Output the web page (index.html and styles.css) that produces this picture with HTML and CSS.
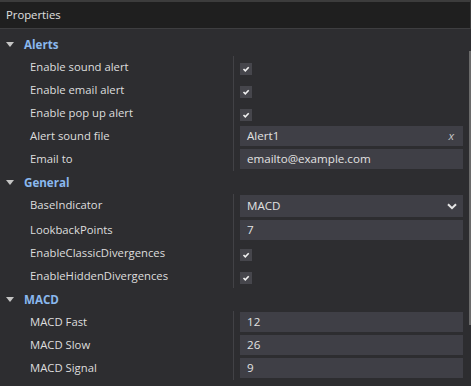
FILE: index.html
```html
<!DOCTYPE html>
<html lang="en">
<head>
  <meta charset="UTF-8">
  <title>Properties</title>
  <link rel="stylesheet" href="styles.css">
</head>
<body>
  <div class="panel">
    <div class="panel-title">Properties</div>
    <div class="panel-body">
      <div class="grid">
        <!-- Alerts -->
        <div class="section-head"><span class="caret"></span>Alerts</div>
        <div class="rows">
          <div class="row"><div class="label">Enable sound alert</div><div class="value"><span class="check"><svg width="12" height="12" viewBox="0 0 12 12"><path d="M3.5 6 L5.3 7.8 L8.7 4.3" fill="none" stroke="#f2f2f2" stroke-width="1.6"/></svg></span></div></div>
          <div class="row"><div class="label">Enable email alert</div><div class="value"><span class="check"><svg width="12" height="12" viewBox="0 0 12 12"><path d="M3.5 6 L5.3 7.8 L8.7 4.3" fill="none" stroke="#f2f2f2" stroke-width="1.6"/></svg></span></div></div>
          <div class="row"><div class="label">Enable pop up alert</div><div class="value"><span class="check"><svg width="12" height="12" viewBox="0 0 12 12"><path d="M3.5 6 L5.3 7.8 L8.7 4.3" fill="none" stroke="#f2f2f2" stroke-width="1.6"/></svg></span></div></div>
          <div class="row"><div class="label">Alert sound file</div><div class="value"><div class="field">Alert1<span class="clear">x</span></div></div></div>
          <div class="row"><div class="label">Email to</div><div class="value"><div class="field">emailto@example.com</div></div></div>
        </div>
        <!-- General -->
        <div class="section-head"><span class="caret"></span>General</div>
        <div class="rows">
          <div class="row row-tall"><div class="label">BaseIndicator</div><div class="value"><div class="field select">MACD<svg class="chev" width="10" height="7" viewBox="0 0 10 7"><path d="M1 1.2 L5 5.2 L9 1.2" fill="none" stroke="#e6e6e6" stroke-width="2"/></svg></div></div></div>
          <div class="row"><div class="label">LookbackPoints</div><div class="value"><div class="field">7</div></div></div>
          <div class="row"><div class="label">EnableClassicDivergences</div><div class="value"><span class="check"><svg width="12" height="12" viewBox="0 0 12 12"><path d="M3.5 6 L5.3 7.8 L8.7 4.3" fill="none" stroke="#f2f2f2" stroke-width="1.6"/></svg></span></div></div>
          <div class="row"><div class="label">EnableHiddenDivergences</div><div class="value"><span class="check"><svg width="12" height="12" viewBox="0 0 12 12"><path d="M3.5 6 L5.3 7.8 L8.7 4.3" fill="none" stroke="#f2f2f2" stroke-width="1.6"/></svg></span></div></div>
        </div>
        <!-- MACD -->
        <div class="section-head"><span class="caret"></span>MACD</div>
        <div class="rows">
          <div class="row"><div class="label">MACD Fast</div><div class="value"><div class="field">12</div></div></div>
          <div class="row"><div class="label">MACD Slow</div><div class="value"><div class="field">26</div></div></div>
          <div class="row"><div class="label">MACD Signal</div><div class="value"><div class="field">9</div></div></div>
        </div>
      </div>
      <div class="scrollbar"><div class="thumb"></div></div>
    </div>
  </div>
</body>
</html>
```

FILE: styles.css
```css
body {
  margin: 0;
  background: #2d2d30;
  color: #dcdcdc;
  font-family: "Open Sans", "Noto Sans", Arial, sans-serif;
  font-size: 11.3px;
  overflow: hidden;
}
.panel {
  width: 471px;
  height: 386px;
  display: flex;
  flex-direction: column;
}
.panel-title {
  height: 26px;
  line-height: 25px;
  padding-left: 6px;
  background: #1f1f1f;
  border-top: 2px solid #3c3c3c;
  border-bottom: 1px solid #3e3e40;
  border-right: 1px solid #3a3a3a;
  color: #e0e0e0;
}
.panel-body {
  flex: 1;
  display: flex;
  padding-top: 4px;
}
.grid {
  flex: 1;
  min-width: 0;
}
.section-head {
  height: 23px;
  line-height: 22px;
  display: flex;
  align-items: center;
  font-weight: bold;
  font-size: 11.6px;
  color: #8ab8ee;
}
.caret {
  width: 0;
  height: 0;
  margin: 0 10px 0 6px;
  border-left: 4px solid transparent;
  border-right: 4px solid transparent;
  border-top: 5px solid #c4c4c4;
}
.row {
  display: flex;
  height: 23px;
}
.row-tall {
  height: 25px;
}
.label {
  width: 203px;
  padding-left: 30px;
  line-height: 21px;
  border-right: 1px solid #424246;
  white-space: nowrap;
  color: #dedede;
}
.value {
  flex: 1;
  padding: 1px 6px 0 6px;
}
.check {
  display: block;
  width: 12px;
  height: 12px;
  margin-top: 6px;
  background: #46464c;
}
.check svg {
  display: block;
}
.field {
  height: 20px;
  line-height: 20px;
  padding-left: 7px;
  padding-right: 9px;
  background: #3f3f46;
  color: #e2e2e2;
  font-size: 11.6px;
  display: flex;
  justify-content: space-between;
  align-items: center;
}
.select {
  height: 22px;
  line-height: 22px;
  padding-right: 6px;
}
.chev {
  display: block;
}
.clear {
  font-style: italic;
  color: #c8c8c8;
}
.scrollbar {
  width: 2px;
  padding-top: 18px;
}
.thumb {
  height: 274px;
  background: #6a6a6a;
}
```
